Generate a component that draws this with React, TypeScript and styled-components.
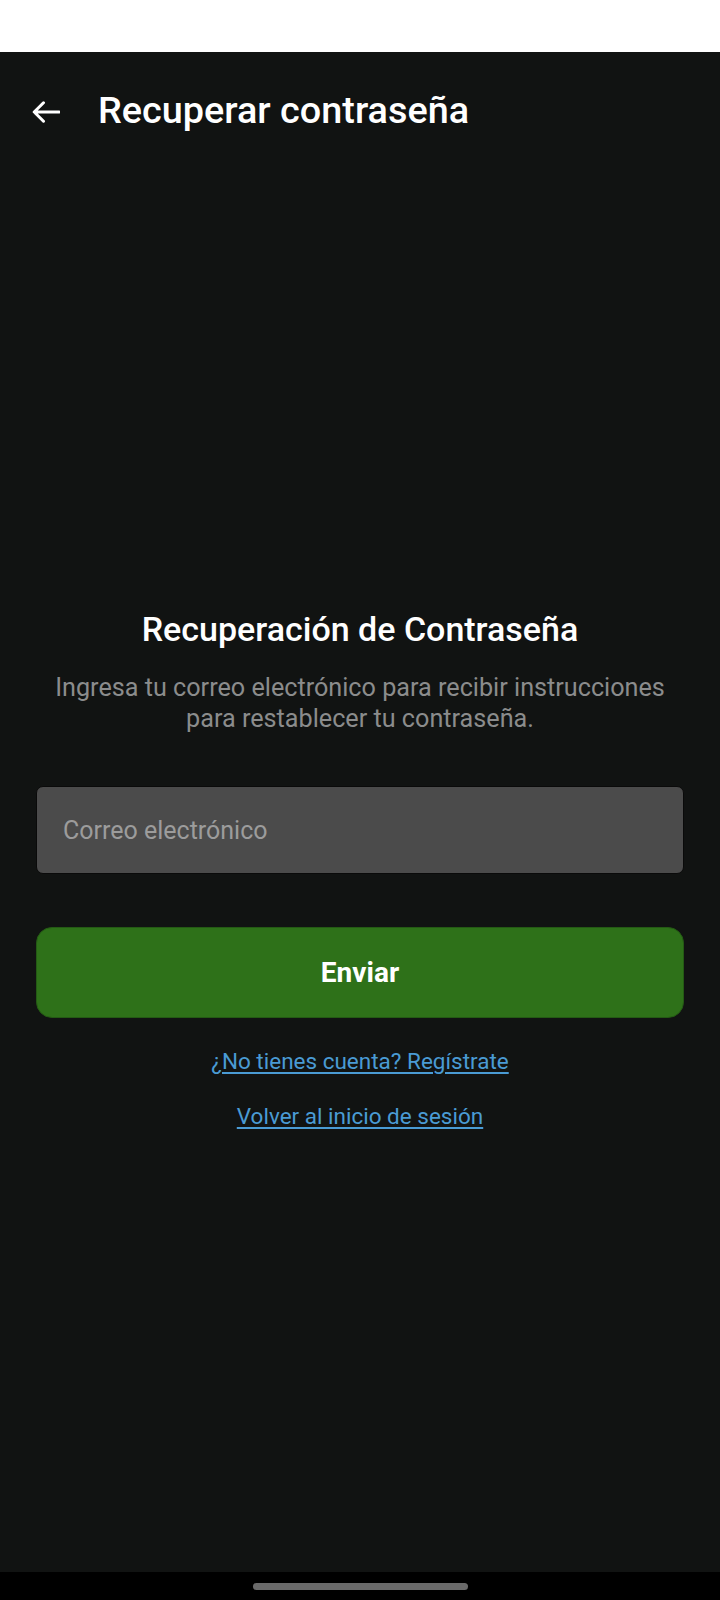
import React from "react";
import styled, { createGlobalStyle } from "styled-components";

const GlobalStyle = createGlobalStyle`
  html, body { margin: 0; padding: 0; background: #111312; }
  * { box-sizing: border-box; }
  body { font-family: Roboto, "Noto Sans", sans-serif; }
`;

const Page = styled.div`
  width: 720px;
  min-height: 1600px;
  display: flex;
  flex-direction: column;
  background: #111312;
`;

const StatusBar = styled.div`
  height: 52px;
  background: #ffffff;
`;

const Main = styled.main`
  flex: 1;
  display: flex;
  flex-direction: column;
  background: #111312;
`;

const AppBar = styled.header`
  height: 116px;
  display: flex;
  align-items: center;
  padding-left: 32px;
  gap: 38px;
`;

const BackButton = styled.button`
  width: 28px;
  height: 22px;
  padding: 0;
  margin-top: 4px;
  border: none;
  background: transparent;
  display: flex;
  align-items: center;
  justify-content: center;
  cursor: pointer;
`;

const AppTitle = styled.h1`
  margin: 0;
  font-family: Roboto, sans-serif;
  font-weight: 500;
  font-size: 37.8px;
  line-height: 40px;
  color: #ffffff;
`;

const Content = styled.section`
  display: flex;
  flex-direction: column;
  align-items: center;
  padding: 0 36px;
  margin-top: 441px;
`;

const Heading = styled.h2`
  margin: 0;
  font-family: Roboto, sans-serif;
  font-weight: 500;
  font-size: 34px;
  line-height: 40px;
  color: #ffffff;
  text-align: center;
`;

const Subtitle = styled.p`
  margin: 23px 0 0;
  font-family: Roboto, sans-serif;
  font-weight: 400;
  font-size: 25.2px;
  line-height: 31px;
  color: #8b8c8c;
  text-align: center;
  white-space: nowrap;
`;

const EmailInput = styled.input`
  margin-top: 52px;
  width: 100%;
  height: 88px;
  border: 1.5px solid #0a0a0a;
  border-radius: 7px;
  background: #4b4b4b;
  padding: 0 26px;
  font-family: Roboto, sans-serif;
  font-size: 25px;
  color: #ffffff;
  outline: none;
  &::placeholder {
    color: #9c9c9c;
  }
`;

const SubmitButton = styled.button`
  margin-top: 53px;
  width: 100%;
  height: 91px;
  border: 1px solid #245a14;
  border-radius: 16px;
  background: #2e7119;
  color: #ffffff;
  font-family: Roboto, sans-serif;
  font-weight: 700;
  font-size: 28px;
  cursor: pointer;
`;

const LinkText = styled.a<{ $gap: number }>`
  margin-top: ${(p) => p.$gap}px;
  font-family: Roboto, sans-serif;
  font-size: 22.5px;
  line-height: 30px;
  color: #4a9bd4;
  text-decoration: underline;
  text-underline-offset: 3px;
  cursor: pointer;
`;

const NavBar = styled.div`
  height: 28px;
  background: #000000;
  display: flex;
  justify-content: center;
  padding-top: 11px;
`;

const NavPill = styled.div`
  width: 215px;
  height: 7px;
  border-radius: 4px;
  background: #6a6a6a;
`;

export default function App() {
  return (
    <>
      <GlobalStyle />
      <Page>
        <StatusBar />
        <Main>
          <AppBar>
            <BackButton aria-label="Volver">
              <svg width="28" height="22" viewBox="0 0 28 22" fill="none">
                <path
                  d="M27 11H2.5M11.5 1.8L2.2 11l9.3 9.2"
                  stroke="#ffffff"
                  strokeWidth="3"
                  strokeLinecap="round"
                  strokeLinejoin="round"
                />
              </svg>
            </BackButton>
            <AppTitle>Recuperar contraseña</AppTitle>
          </AppBar>
          <Content>
            <Heading>Recuperación de Contraseña</Heading>
            <Subtitle>
              Ingresa tu correo electrónico para recibir instrucciones
              <br />
              para restablecer tu contraseña.
            </Subtitle>
            <EmailInput type="email" placeholder="Correo electrónico" />
            <SubmitButton>Enviar</SubmitButton>
            <LinkText $gap={28}>¿No tienes cuenta? Regístrate</LinkText>
            <LinkText $gap={25}>Volver al inicio de sesión</LinkText>
          </Content>
        </Main>
        <NavBar>
          <NavPill />
        </NavBar>
      </Page>
    </>
  );
}
